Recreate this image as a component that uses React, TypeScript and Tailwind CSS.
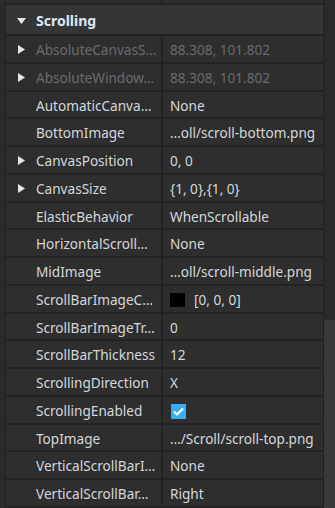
import React from 'react';

type Row = {
  name: string;
  value?: string;
  expand?: boolean;
  disabled?: boolean;
  kind?: 'color' | 'check';
};

const rows: Row[] = [
  { name: 'AbsoluteCanvasS…', value: '88.308, 101.802', expand: true, disabled: true },
  { name: 'AbsoluteWindow…', value: '88.308, 101.802', expand: true, disabled: true },
  { name: 'AutomaticCanva…', value: 'None' },
  { name: 'BottomImage', value: '…oll/scroll-bottom.png' },
  { name: 'CanvasPosition', value: '0, 0', expand: true },
  { name: 'CanvasSize', value: '{1, 0},{1, 0}', expand: true },
  { name: 'ElasticBehavior', value: 'WhenScrollable' },
  { name: 'HorizontalScroll…', value: 'None' },
  { name: 'MidImage', value: '…oll/scroll-middle.png' },
  { name: 'ScrollBarImageC…', value: '[0, 0, 0]', kind: 'color' },
  { name: 'ScrollBarImageTr…', value: '0' },
  { name: 'ScrollBarThickness', value: '12' },
  { name: 'ScrollingDirection', value: 'X' },
  { name: 'ScrollingEnabled', kind: 'check' },
  { name: 'TopImage', value: '…/Scroll/scroll-top.png' },
  { name: 'VerticalScrollBarI…', value: 'None' },
  { name: 'VerticalScrollBar…', value: 'Right' },
];

function RightArrow() {
  return (
    <svg width="7" height="9" viewBox="0 0 7 9" className="shrink-0">
      <path d="M0 0 L7 4.5 L0 9 Z" fill="#e6e6e6" />
    </svg>
  );
}

function DownArrow() {
  return (
    <svg width="9" height="6" viewBox="0 0 9 6" className="shrink-0">
      <path d="M0 0 L9 0 L4.5 6 Z" fill="#e6e6e6" />
    </svg>
  );
}

function PropRow({ row }: { row: Row }) {
  const textColor = row.disabled ? 'text-[#6b6b6b]' : 'text-[#d4d8dc]';
  return (
    <div className="flex h-[27.75px] shrink-0 border-b-2 border-[#232323]">
      <div className="flex w-[157px] items-center border-r-2 border-[#232323] pt-[3px]">
        <div className="flex w-[30px] justify-center pl-[1px] pb-[1px]">{row.expand && <RightArrow />}</div>
        <span className={`${textColor} whitespace-nowrap`}>{row.name}</span>
      </div>
      <div className="flex flex-1 items-center pl-[7px] pt-[3px]">
        {row.kind === 'color' && (
          <div className="mr-[9px] h-[14px] w-[15px] bg-black" />
        )}
        {row.kind === 'check' ? (
          <div className="ml-[1px] flex h-[15px] w-[15px] items-center justify-center rounded-[1px] bg-[#35b0f5]">
            <svg width="11" height="9" viewBox="0 0 11 9">
              <path d="M1 4.5 L4 7.5 L10 1.5" stroke="#fff" strokeWidth="2.2" fill="none" />
            </svg>
          </div>
        ) : (
          <span className={`${textColor} whitespace-nowrap`}>{row.value}</span>
        )}
      </div>
    </div>
  );
}

export default function App() {
  return (
    <div
      className="flex h-[508px] w-[335px] overflow-hidden bg-[#2e2e2e] text-[13.6px]"
      style={{ fontFamily: '"Noto Sans", "Open Sans", sans-serif' }}
    >
      <div className="w-[5px] shrink-0 bg-[#2a2a2a]" />
      <div className="w-[1px] shrink-0 bg-[#1f1f1f]" />
      <div className="flex w-[317px] flex-col">
        <div className="flex h-[5px] shrink-0 border-b-2 border-[#232323]">
          <div className="w-[157px] border-r-2 border-[#232323]" />
        </div>
        <div className="flex h-[31px] shrink-0 items-center border-b-2 border-[#232323] bg-[#353535] pt-[2px]">
          <div className="flex w-[30px] justify-center pl-[1px]">
            <DownArrow />
          </div>
          <span className="text-[14px] font-bold text-[#dfe8f2]">Scrolling</span>
        </div>
        {rows.map(r => (
          <PropRow key={r.name} row={r} />
        ))}
      </div>
      <div className="w-[1px] shrink-0 bg-[#1f1f1f]" />
      <div className="flex flex-1 flex-col bg-[#2a2a2a]">
        <div className="h-[320px]" />
        <div className="flex-1 bg-[#3a3a3a]" />
      </div>
    </div>
  );
}
